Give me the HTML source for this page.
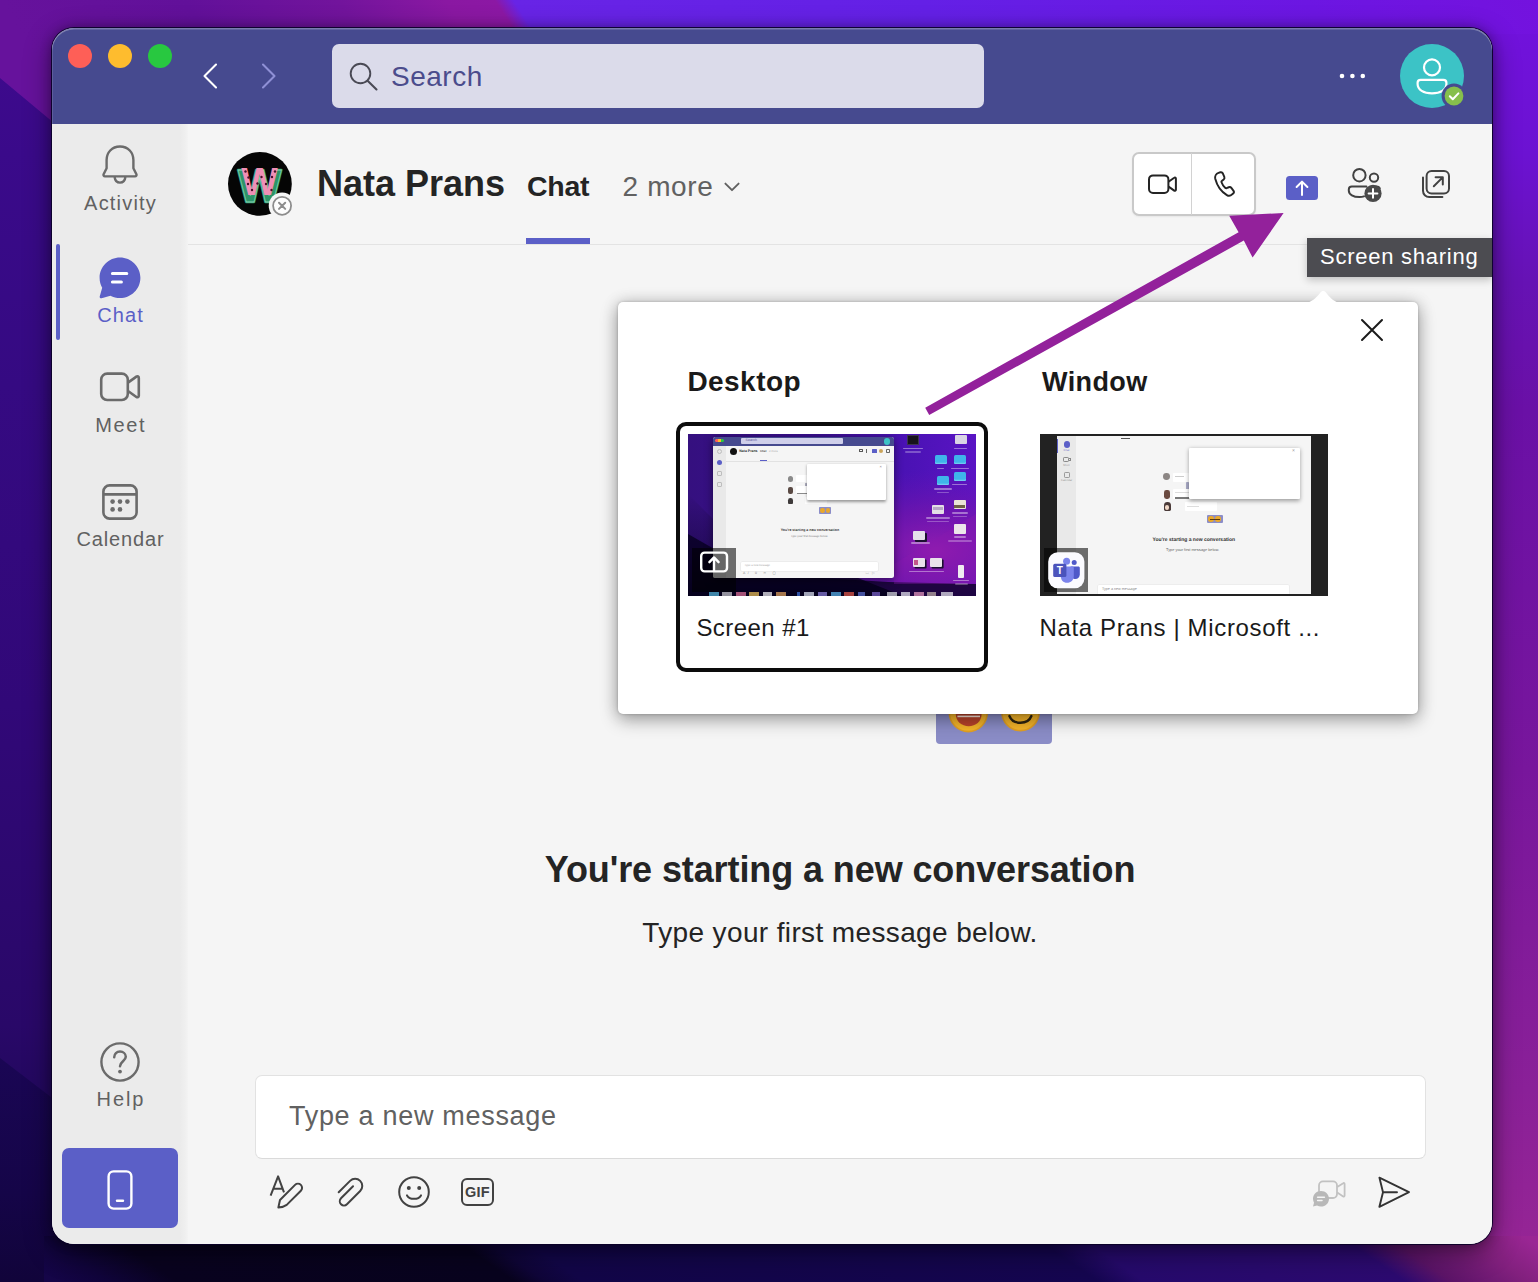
<!DOCTYPE html>
<html lang="en">
<head>
<meta charset="utf-8">
<title>Nata Prans | Microsoft Teams</title>
<style>
*{box-sizing:border-box;margin:0;padding:0}
html,body{width:1538px;height:1282px;overflow:hidden}
body{font-family:"Liberation Sans",sans-serif;position:relative;background:#3a0c8c;color:#242424}
.abs{position:absolute}
#wall{position:absolute;left:0;top:0;width:1538px;height:1282px;overflow:hidden}
#win{position:absolute;left:52px;top:28px;width:1440px;height:1216px;border-radius:22px;overflow:hidden;background:#f5f5f5;box-shadow:0 0 0 1px rgba(10,0,40,.9),0 8px 28px rgba(0,0,0,.45),0 0 12px rgba(0,0,0,.3)}
#titlebar{position:absolute;left:0;top:0;width:1440px;height:96px;background:#464a8f}
#hl{position:absolute;left:0;top:0;width:1440px;height:1216px;border-radius:22px;box-shadow:inset 0 1.5px 0 rgba(255,255,255,.28),inset 1px 0 0 rgba(255,255,255,.12);pointer-events:none}
.tl{position:absolute;top:16px;width:24px;height:24px;border-radius:50%}
#search{position:absolute;left:280px;top:16px;width:652px;height:64px;border-radius:7px;background:#dbdbea}
#search span{position:absolute;left:59px;top:16px;font-size:28px;line-height:34px;color:#4b4c8c;letter-spacing:.5px}
#side{position:absolute;left:0;top:96px;width:136px;height:1120px;background:linear-gradient(90deg,#ebebeb 0,#ebebeb 128px,#efefef 133px,#f3f3f3 136px)}
.nav{position:absolute;left:0;width:136px;text-align:center;font-size:20px;line-height:24px;color:#616161;letter-spacing:.8px}
#main{position:absolute;left:136px;top:96px;width:1304px;height:1120px;background:#f5f5f5}
#hdrline{position:absolute;left:0;top:120px;width:1304px;height:1px;background:#e3e3e3}

.th div,.th span{position:absolute}
.mini{font-family:"Liberation Sans",sans-serif;white-space:nowrap;color:#333;line-height:1;text-rendering:geometricPrecision}
.fold{width:12px;height:9px;border-radius:1.5px;background:#3fb4ea;box-shadow:0 -1.5px 0 -0.2px #6fcaf2 inset}
.dfile{width:12px;height:9px;border-radius:1px;background:#d9d5e4}
.dlab{width:16px;height:1.6px;background:rgba(255,255,255,.4);border-radius:1px}
</style>
</head>
<body>
<div id="wall">
<svg width="1538" height="1282" viewBox="0 0 1538 1282" style="position:absolute;left:0;top:0">
<defs>
<linearGradient id="gL" x1="0" y1="0" x2="0" y2="1"><stop offset="0" stop-color="#400a8e"/><stop offset=".12" stop-color="#3a0a8a"/><stop offset=".3" stop-color="#350a82"/><stop offset=".55" stop-color="#310878"/><stop offset=".8" stop-color="#290868"/><stop offset=".86" stop-color="#22085e"/><stop offset="1" stop-color="#1c0652"/></linearGradient>
<linearGradient id="gT" gradientUnits="userSpaceOnUse" x1="0" y1="0" x2="1087" y2="-699"><stop offset="0" stop-color="#66129c"/><stop offset=".12" stop-color="#62109a"/><stop offset=".22" stop-color="#72149c"/><stop offset=".29" stop-color="#8a18a2"/><stop offset=".322" stop-color="#8c18a4"/><stop offset=".334" stop-color="#6824e6"/><stop offset=".6" stop-color="#6420e6"/><stop offset=".85" stop-color="#6c16e2"/><stop offset="1" stop-color="#7412de"/></linearGradient>
<linearGradient id="gR" x1="0" y1="0" x2="0" y2="1"><stop offset="0" stop-color="#7212de"/><stop offset=".12" stop-color="#6c12d2"/><stop offset=".22" stop-color="#6612b4"/><stop offset=".32" stop-color="#6a10a6"/><stop offset=".6" stop-color="#78169c"/><stop offset=".85" stop-color="#8a2098"/><stop offset="1" stop-color="#982694"/></linearGradient>
<linearGradient id="gB" gradientUnits="userSpaceOnUse" x1="0" y1="1244" x2="496" y2="526"><stop offset="0" stop-color="#150548"/><stop offset=".035" stop-color="#10043a"/><stop offset=".08" stop-color="#09031f"/><stop offset=".3" stop-color="#08031e"/><stop offset=".32" stop-color="#0f0538"/><stop offset=".345" stop-color="#120648"/><stop offset=".68" stop-color="#150650"/><stop offset=".71" stop-color="#260a6c"/><stop offset=".88" stop-color="#2c0a70"/><stop offset=".91" stop-color="#5c1468"/><stop offset=".96" stop-color="#82207e"/><stop offset="1" stop-color="#9a2694"/></linearGradient>
<linearGradient id="gLB" gradientUnits="userSpaceOnUse" x1="0" y1="1060" x2="0" y2="1282"><stop offset="0" stop-color="#1a0654"/><stop offset=".6" stop-color="#150548"/><stop offset="1" stop-color="#11043a"/></linearGradient>
<linearGradient id="gS" x1="0" y1="0" x2="0" y2="1"><stop offset="0" stop-color="#000" stop-opacity=".45"/><stop offset="1" stop-color="#000" stop-opacity="0"/></linearGradient>
</defs>
<rect x="0" y="0" width="800" height="1282" fill="url(#gL)"/>
<rect x="800" y="0" width="738" height="1282" fill="url(#gR)"/>
<path d="M0 0 H1538 V34 H60 V128 L0 78 Z" fill="url(#gT)"/>
<path d="M0 1058 L60 1104 V1282 H0 Z" fill="url(#gLB)"/>
<path d="M44 1236 H1538 V1282 H44 Z" fill="url(#gB)"/>
</svg>
</div>

<div id="win">
  <div id="titlebar">
    <div class="tl" style="left:16px;background:#fe5f57"></div>
    <div class="tl" style="left:56px;background:#febc2e"></div>
    <div class="tl" style="left:96px;background:#28c840"></div>
    <svg class="abs" style="left:146px;top:32px" width="24" height="32" viewBox="0 0 24 32"><path d="M18 4.5 L6.5 16 L18 27.5" fill="none" stroke="#fff" stroke-width="2.1" stroke-linecap="round" stroke-linejoin="round"/></svg>
    <svg class="abs" style="left:205px;top:32px" width="24" height="32" viewBox="0 0 24 32"><path d="M6 4.5 L17.5 16 L6 27.5" fill="none" stroke="#8f90d6" stroke-width="2.1" stroke-linecap="round" stroke-linejoin="round"/></svg>
    <div id="search">
      <svg class="abs" style="left:14px;top:16px" width="34" height="34" viewBox="0 0 34 34"><circle cx="14.5" cy="13.5" r="9.8" fill="none" stroke="#4a4a55" stroke-width="1.9"/><path d="M21.6 20.8 L30.5 29.5" stroke="#4a4a55" stroke-width="2.1" stroke-linecap="round"/></svg>
      <span>Search</span>
    </div>
    <svg class="abs" style="left:1284px;top:40px" width="34" height="16" viewBox="0 0 34 16"><g fill="#fff"><circle cx="6" cy="8" r="2.3"/><circle cx="16.4" cy="8" r="2.3"/><circle cx="26.8" cy="8" r="2.3"/></g></svg>
    <svg class="abs" style="left:1344px;top:12px" width="76" height="76" viewBox="0 0 76 76"><circle cx="36" cy="36" r="32" fill="#3cc3c6"/><circle cx="36" cy="27.4" r="8" fill="none" stroke="#fff" stroke-width="2.2"/><path d="M24.6 39.8 H47.4 C49.2 39.8 50.4 41 50.4 42.8 V44 C50.4 49.8 44.4 53.4 36 53.4 C27.6 53.4 21.6 49.8 21.6 44 V42.8 C21.6 41 22.8 39.8 24.6 39.8 Z" fill="none" stroke="#fff" stroke-width="2.2"/><circle cx="58" cy="56" r="12.4" fill="#464a8f"/><circle cx="58" cy="56" r="9.4" fill="#86bf4c"/><path d="M53.8 56.2 L56.8 59.2 L62.4 53.4" fill="none" stroke="#fff" stroke-width="2" stroke-linecap="round" stroke-linejoin="round"/></svg>
  </div>
  <div id="side">
    <!-- Activity -->
    <svg class="abs" style="left:48px;top:19px" width="40" height="44" viewBox="0 0 40 44"><path d="M20 3.5 C11.8 3.5 6.6 9.6 6.6 17 V25.2 L3.6 31.2 C3.1 32.3 3.8 33.4 5 33.4 H35 C36.2 33.4 36.9 32.3 36.4 31.2 L33.4 25.2 V17 C33.4 9.6 28.2 3.5 20 3.5 Z" fill="none" stroke="#6b6b6b" stroke-width="2.4" stroke-linejoin="round"/><path d="M14.6 34 C15 37.4 17.2 39.6 20 39.6 C22.8 39.6 25 37.4 25.4 34" fill="none" stroke="#6b6b6b" stroke-width="2.4"/></svg>
        <div class="nav" style="top:67px;letter-spacing:1.2px;padding-left:1.2px">Activity</div>
    <!-- Chat active -->
    <div class="abs" style="left:4px;top:120px;width:4px;height:96px;background:#5b5fc7;border-radius:2px"></div>
    <svg class="abs" style="left:46px;top:132px" width="44" height="44" viewBox="0 0 44 44"><path d="M22 1.5 C10.7 1.5 1.6 10.6 1.6 21.8 C1.6 25.4 2.5 28.8 4.2 31.8 L1.7 40.4 C1.4 41.6 2.4 42.6 3.6 42.3 L12.4 39.8 C15.3 41.3 18.6 42.1 22 42.1 C33.3 42.1 42.4 33 42.4 21.8 C42.4 10.6 33.3 1.5 22 1.5 Z" fill="#5b5fc7"/><path d="M14.4 17.4 H28.8 M14.4 26 H23.4" stroke="#fff" stroke-width="3" stroke-linecap="round"/></svg>
    <div class="nav" style="top:179px;color:#5b5fc7;letter-spacing:1.1px;padding-left:1.1px">Chat</div>
    <!-- Meet -->
    <svg class="abs" style="left:46px;top:246px" width="44" height="34" viewBox="0 0 44 34"><rect x="3.2" y="3.6" width="26.6" height="26.4" rx="6" fill="none" stroke="#6b6b6b" stroke-width="2.6"/><path d="M30 12.6 L38.4 6.6 C39.5 5.9 40.8 6.6 40.8 7.9 V25.7 C40.8 27 39.5 27.7 38.4 27 L30 21" fill="none" stroke="#6b6b6b" stroke-width="2.6" stroke-linejoin="round"/></svg>
    <div class="nav" style="top:289px;letter-spacing:1.6px;padding-left:1.6px">Meet</div>
    <!-- Calendar -->
    <svg class="abs" style="left:48px;top:358px" width="40" height="40" viewBox="0 0 40 40"><rect x="3.4" y="3.4" width="33.2" height="33.2" rx="6.2" fill="none" stroke="#6b6b6b" stroke-width="2.6"/><path d="M3.6 12.4 H36.4" stroke="#6b6b6b" stroke-width="2.6"/><g fill="#6b6b6b"><circle cx="12.6" cy="19.6" r="2.3"/><circle cx="20" cy="19.6" r="2.3"/><circle cx="27.4" cy="19.6" r="2.3"/><circle cx="12.6" cy="27.4" r="2.3"/><circle cx="20" cy="27.4" r="2.3"/></g></svg>
    <div class="nav" style="top:403px;letter-spacing:.85px;padding-left:.85px">Calendar</div>
    <!-- Help -->
    <svg class="abs" style="left:46px;top:916px" width="44" height="44" viewBox="0 0 44 44"><circle cx="22" cy="22" r="18.6" fill="none" stroke="#6b6b6b" stroke-width="2.4"/><path d="M16.2 17.2 C16.2 13.8 18.8 11.6 22 11.6 C25.2 11.6 27.8 13.8 27.8 16.8 C27.8 21 22 21.6 22 26.2" fill="none" stroke="#6b6b6b" stroke-width="2.5" stroke-linecap="round"/><circle cx="22" cy="31.6" r="1.9" fill="#6b6b6b"/></svg>
    <div class="nav" style="top:963px;letter-spacing:1.9px;padding-left:1.9px">Help</div>
    <!-- Mobile button -->
    <div class="abs" style="left:10px;top:1024px;width:116px;height:80px;border-radius:7px;background:#5b5fc7"></div>
    <svg class="abs" style="left:54px;top:1045px" width="28" height="42" viewBox="0 0 28 42"><rect x="2.6" y="2.4" width="22.8" height="37.2" rx="5" fill="none" stroke="#fff" stroke-width="2.4"/><path d="M11 31.8 H17" stroke="#fff" stroke-width="2.4" stroke-linecap="round"/></svg>
  </div>
  <div id="main">
    <div id="hdrline"></div>
    <!-- avatar -->
    <svg class="abs" style="left:38px;top:26px" width="76" height="76" viewBox="0 0 76 76">
      <circle cx="33.9" cy="33.9" r="31.9" fill="#050505"/>
      <text x="33.6" y="51.6" text-anchor="middle" font-family="Liberation Sans, sans-serif" font-weight="bold" font-size="46" fill="#2c9468" stroke="#2c9468" stroke-width="2.4" stroke-linejoin="round">W</text>
      <text x="33.6" y="51.6" text-anchor="middle" font-family="Liberation Sans, sans-serif" font-weight="bold" font-size="46" fill="none" stroke="#a6ecd2" stroke-width=".8" opacity=".7">W</text>
      <text x="0" y="0" transform="translate(33.6,45.4) scale(.84,.86)" text-anchor="middle" font-family="Liberation Sans, sans-serif" font-weight="bold" font-size="46" fill="#f08fb6">W</text>
      <g fill="#4a0f2a"><circle cx="19.5" cy="21.5" r="1.2"/><circle cx="22.5" cy="27.5" r="1.2"/><circle cx="22" cy="34" r="1.2"/><circle cx="26" cy="40" r="1.2"/><circle cx="31.5" cy="33.5" r="1.2"/><circle cx="35.5" cy="27" r="1.2"/><circle cx="40" cy="34" r="1.2"/><circle cx="45.5" cy="40" r="1.2"/><circle cx="46" cy="27" r="1.2"/><circle cx="49" cy="21.5" r="1.2"/></g>
      <circle cx="56.1" cy="55.8" r="13.4" fill="#f5f5f5"/>
      <circle cx="56.1" cy="55.8" r="9" fill="#fdfdfd" stroke="#8d8d8d" stroke-width="1.8"/>
      <path d="M53 52.7 L59.2 58.9 M59.2 52.7 L53 58.9" stroke="#8d8d8d" stroke-width="2" stroke-linecap="round"/>
    </svg>
    <div class="abs" style="left:129px;top:38px;font-size:36px;line-height:44px;font-weight:bold;color:#242424;white-space:nowrap">Nata Prans</div>
    <div class="abs" style="left:339px;top:45px;font-size:28.5px;line-height:34px;font-weight:bold;color:#242424;white-space:nowrap;letter-spacing:-.3px">Chat</div>
    <div class="abs" style="left:338px;top:114px;width:64px;height:6px;background:#5b5fc7"></div>
    <div class="abs" style="left:434.6px;top:46px;font-size:28px;line-height:34px;color:#616161;white-space:nowrap;letter-spacing:.6px">2 more</div>
    <svg class="abs" style="left:534px;top:55.6px" width="20" height="14" viewBox="0 0 20 14"><path d="M3.4 3.6 L10 10.2 L16.6 3.6" fill="none" stroke="#616161" stroke-width="1.9" stroke-linecap="round" stroke-linejoin="round"/></svg>
    <!-- call buttons -->
    <div class="abs" style="left:944px;top:28px;width:123.5px;height:63.5px;border:2px solid #c9c9c9;border-radius:7px;background:#fff;box-shadow:0 1px 2px rgba(0,0,0,.06)"></div>
    <div class="abs" style="left:1002.6px;top:29px;width:1.5px;height:62px;background:#d2d2d2"></div>
    <svg class="abs" style="left:958px;top:47px" width="34" height="26" viewBox="0 0 34 26"><rect x="3" y="4.4" width="19.4" height="17.6" rx="4" fill="none" stroke="#242424" stroke-width="2"/><path d="M22.6 10.8 L28.2 6.8 C29 6.2 29.9 6.8 29.9 7.7 V18.7 C29.9 19.6 29 20.2 28.2 19.6 L22.6 15.6" fill="none" stroke="#242424" stroke-width="2" stroke-linejoin="round"/></svg>
    <svg class="abs" style="left:1021px;top:45px" width="30" height="30" viewBox="0 0 30 30"><path d="M8.3 4.1 L10.4 3.5 C11.6 3.2 12.8 3.8 13.3 4.9 L14.9 8.7 C15.3 9.7 15 10.9 14.2 11.6 L12 13.4 C11.6 13.7 11.5 14.3 11.7 14.8 C12.5 17.1 14 19.4 16.1 21.3 C16.5 21.6 17 21.7 17.5 21.5 L20 20.5 C21 20.1 22.2 20.4 22.9 21.3 L25.2 24.3 C26 25.3 25.9 26.7 25 27.6 L23.8 28.6 C22.2 30.2 19.8 30.6 17.8 29.4 C11.2 25.5 6.6 18.6 4.6 10.9 C4 8.1 5.5 5 8.3 4.1 Z" transform="translate(2.2,0.2) scale(.88)" fill="none" stroke="#242424" stroke-width="2.2" stroke-linejoin="round"/></svg>
    <!-- share screen -->
    <div class="abs" style="left:1098px;top:52px;width:32px;height:24px;border-radius:3.5px;background:#5b5fc7"></div>
    <svg class="abs" style="left:1098px;top:52px" width="32" height="24" viewBox="0 0 32 24"><path d="M16 19 V6 M10.6 11 L16 5.6 L21.4 11" fill="none" stroke="#fff" stroke-width="2" stroke-linecap="round" stroke-linejoin="round"/></svg>
    <!-- add people -->
    <svg class="abs" style="left:1157px;top:42px" width="40" height="38" viewBox="0 0 40 38"><circle cx="14.4" cy="9.2" r="6.2" fill="none" stroke="#424242" stroke-width="2"/><circle cx="29" cy="11.6" r="4.2" fill="none" stroke="#424242" stroke-width="2"/><path d="M19 30.4 C17.6 30.9 16 31.1 14.4 31.1 C8.4 31.1 3.8 28.6 3.8 24.4 V23.4 C3.8 21.7 5.2 20.4 6.8 20.4 H21.4" fill="none" stroke="#424242" stroke-width="2" stroke-linecap="round"/><path d="M26.4 20.4 H31.6 C33.2 20.4 34.4 21.4 34.8 22.6" fill="none" stroke="#424242" stroke-width="2" stroke-linecap="round"/><circle cx="28" cy="27.4" r="8.6" fill="#4a4a4a"/><path d="M28 23 V31.8 M23.6 27.4 H32.4" stroke="#fff" stroke-width="2" stroke-linecap="round"/></svg>
    <!-- pop out -->
    <svg class="abs" style="left:1232px;top:44px" width="32" height="32" viewBox="0 0 32 32"><rect x="6.6" y="3" width="22.4" height="22.4" rx="5" fill="none" stroke="#424242" stroke-width="2"/><path d="M3 9.6 V22.8 C3 26.2 5.8 29 9.2 29 H22.4" fill="none" stroke="#424242" stroke-width="2" stroke-linecap="round"/><path d="M13.8 18.2 L22.4 9.6 M15.6 9.2 H22.8 V16.4" fill="none" stroke="#424242" stroke-width="2" stroke-linecap="round" stroke-linejoin="round"/></svg>
    <!-- emoji sticker (partially hidden by popup) -->
    <div class="abs" style="left:748px;top:540px;width:116px;height:80px;border-radius:4px;background:#8a8cc6"></div>
    <svg class="abs" style="left:748px;top:560px" width="116" height="60" viewBox="0 0 116 60">
      <circle cx="32.3" cy="28.6" r="19" fill="#f5b52a" stroke="#e2a024" stroke-width="1.6"/>
      <path d="M19.8 30 H45.6 C45.6 37.6 39.6 42.2 32.7 42.2 C25.8 42.2 19.8 37.6 19.8 30 Z" fill="#b9432b"/>
      <path d="M21.4 32.4 H44" stroke="#fbe9dc" stroke-width="1.6"/>
      <circle cx="84.5" cy="28" r="18.6" fill="#f5b52a" stroke="#e2a024" stroke-width="1.6"/>
      <path d="M73.4 32 C77 41 92 41 95.4 32" fill="none" stroke="#2e2410" stroke-width="2.4" stroke-linecap="round"/>
    </svg>
    <div id="t1" class="abs" style="left:0;top:724px;width:1304px;text-align:center;font-size:36px;line-height:44px;font-weight:bold;color:#242424;white-space:nowrap;letter-spacing:-.1px"><span>You're starting a new conversation</span></div>
    <div id="t2" class="abs" style="left:0;top:791px;width:1304px;text-align:center;font-size:28px;line-height:36px;color:#242424;white-space:nowrap;letter-spacing:.37px"><span>Type your first message below.</span></div>
    <!-- share popup -->
    <div id="pop" class="abs" style="left:430px;top:178px;width:800px;height:412px;border-radius:5px;background:#fff;box-shadow:0 6px 18px rgba(0,0,0,.32),0 0 16px rgba(0,0,0,.15),0 0 3px rgba(0,0,0,.2)">
      <svg class="abs" style="left:686px;top:-13px" width="38" height="14" viewBox="0 0 38 14"><path d="M0 14 C8 13.6 12.6 8.4 16.6 3.2 C18.2 1.2 20.2 1.2 21.8 3.2 C25.8 8.4 30 13.6 38 14 Z" fill="#fff"/></svg>
      <svg class="abs" style="left:740px;top:14px" width="28" height="28" viewBox="0 0 28 28"><path d="M4 4 L24 24 M24 4 L4 24" stroke="#1b1b1b" stroke-width="2" stroke-linecap="round"/></svg>
      <div class="abs" style="left:69.4px;top:63px;font-size:28px;line-height:34px;font-weight:bold;color:#1a1a1a;white-space:nowrap;letter-spacing:.45px" id="p1"><span>Desktop</span></div>
      <div class="abs" style="left:424px;top:63px;font-size:27px;line-height:34px;font-weight:bold;color:#1a1a1a;white-space:nowrap;letter-spacing:.4px" id="p2"><span>Window</span></div>
      <!-- selected card -->
      <div class="abs" style="left:58px;top:120px;width:312px;height:250px;border:4px solid #0c0c0c;border-radius:10px"></div>
      <div id="th1" class="abs th" style="left:70px;top:132px;width:288px;height:162px;overflow:hidden;background:#2a0a6a">
        <svg style="position:absolute;left:0;top:0" width="288" height="162" viewBox="0 0 288 162">
          <defs>
            <linearGradient id="w1" x1="0" y1="0" x2="1" y2="0"><stop offset="0" stop-color="#35107f"/><stop offset=".45" stop-color="#3a0f90"/><stop offset=".75" stop-color="#4a12b4"/><stop offset="1" stop-color="#5a14c4"/></linearGradient>
            <linearGradient id="w2" x1="0" y1="0" x2="0" y2="1"><stop offset="0" stop-color="#000" stop-opacity="0"/><stop offset=".55" stop-color="#05001c" stop-opacity=".35"/><stop offset="1" stop-color="#04001a" stop-opacity=".95"/></linearGradient>
            <radialGradient id="w3" cx=".86" cy=".72" r=".5"><stop offset="0" stop-color="#9a1eae" stop-opacity=".9"/><stop offset=".5" stop-color="#7c16aa" stop-opacity=".6"/><stop offset="1" stop-color="#6a14b0" stop-opacity="0"/></radialGradient>
          </defs>
          <rect width="288" height="162" fill="url(#w1)"/>
          <rect width="288" height="162" fill="url(#w3)"/>
          <path d="M0 60 L0 162 L215 162 L160 140 L60 120 Z" fill="url(#w2)"/>
          <path d="M0 100 L0 162 L288 162 L288 150 L200 148 L70 140 Z" fill="#05001c" opacity=".75"/>
          <path d="M206 130 L288 80 L288 150 L206 150 Z" fill="#8a1ab0" opacity=".35"/>
        </svg>
        <!-- mini teams window -->
        <div style="left:24.6px;top:2.9px;width:181.2px;height:141px;background:#f5f5f5;border-radius:2.5px;overflow:hidden;box-shadow:0 2px 8px rgba(0,0,0,.5)">
          <div style="left:0;top:0;width:181.2px;height:9px;background:#464a8f"></div>
          <div style="left:2px;top:2px;width:9px;height:3px;border-radius:1.5px;background:linear-gradient(90deg,#fe5f57 0 30%,#febc2e 36% 64%,#28c840 70%)"></div>
          <div style="left:28.3px;top:1.4px;width:102.5px;height:6.2px;border-radius:1px;background:#cfcfea"></div>
          <span class="mini" style="left:33px;top:2.4px;font-size:3.6px;color:#5a5b98">Search</span>
          <div style="left:171px;top:1.4px;width:6.4px;height:6.4px;border-radius:50%;background:#3cc3c6"></div>
          <div style="left:0;top:9px;width:13.8px;height:132px;background:#e9e9e9"></div>
          <div style="left:4.4px;top:12.4px;width:5px;height:5px;border-radius:50%;border:.8px solid #bdbdbd"></div>
          <div style="left:4.2px;top:23px;width:5.4px;height:5.4px;border-radius:50%;background:#5b5fc7"></div>
          <div style="left:4.2px;top:34.4px;width:5.6px;height:4.4px;border-radius:1px;border:.8px solid #bdbdbd"></div>
          <div style="left:4.2px;top:45.4px;width:5.4px;height:5.2px;border-radius:1px;border:.8px solid #bdbdbd"></div>
          <div style="left:13.8px;top:24.2px;width:168px;height:.6px;background:#e2e2e2"></div>
          <div style="left:17.4px;top:11.4px;width:7px;height:7px;border-radius:50%;background:#111"></div>
          <span class="mini" style="left:26.7px;top:13px;font-size:3.5px;font-weight:bold;color:#333">Nata Prans</span>
          <span class="mini" style="left:47.4px;top:13.4px;font-size:2.9px;font-weight:bold;color:#555">Chat</span>
          <span class="mini" style="left:56.3px;top:13.4px;font-size:2.9px;color:#aaa">2 more</span>
          <div style="left:47px;top:23.4px;width:7.4px;height:.9px;background:#5b5fc7"></div>
          <div style="left:146px;top:12.6px;width:4px;height:3px;border-radius:.6px;border:.6px solid #555"></div>
          <div style="left:153px;top:12.4px;width:1.2px;height:3.6px;background:#666"></div>
          <div style="left:159.6px;top:12.6px;width:4.4px;height:3.2px;border-radius:.6px;background:#5b5fc7"></div>
          <div style="left:166.4px;top:12.2px;width:4px;height:4px;border-radius:50%;background:#caa45a"></div>
          <div style="left:173.4px;top:12.4px;width:3.6px;height:3.6px;border-radius:.8px;border:.6px solid #666"></div>
          <!-- bubbles -->
          <div style="left:75px;top:39.6px;width:5.4px;height:5.4px;border-radius:50%;background:#8a8a8a"></div>
          <div style="left:75.4px;top:50.6px;width:4.6px;height:6.4px;border-radius:2px;background:#5a4a44"></div>
          <div style="left:75.2px;top:60.8px;width:5px;height:6.2px;border-radius:2.4px 2.4px 1px 1px;background:#3e3a3a"></div>
          <div style="left:83px;top:38.4px;width:12px;height:7px;border-radius:1px;background:#fff"></div>
          <div style="left:92px;top:46px;width:2.6px;height:6.4px;border-radius:.6px;background:#aab"></div>
          <div style="left:83px;top:49.4px;width:28px;height:6.8px;border-radius:1px;background:#fff"></div>
          <div style="left:84px;top:56.4px;width:26px;height:1.1px;background:#8a8a8a"></div>
          <div style="left:92px;top:60.4px;width:22px;height:6.4px;border-radius:1px;background:#fff"></div>
          <div style="left:106.6px;top:70.6px;width:11.8px;height:6.8px;border-radius:.8px;background:#8b8dc8"></div>
          <div style="left:107.8px;top:71.6px;width:4.4px;height:4.4px;border-radius:50%;background:#e9a82c"></div>
          <div style="left:113px;top:71.6px;width:4.4px;height:4.4px;border-radius:50%;background:#e9a82c"></div>
          <!-- mini popup -->
          <div style="left:94.9px;top:27px;width:78.6px;height:36.2px;background:#fff;border-radius:1px;box-shadow:0 1.2px 3px rgba(0,0,0,.38)"></div>
          <span class="mini" style="left:167px;top:28px;font-size:4px;color:#777">×</span>
          <span class="mini" style="left:68.2px;top:92px;font-size:3.54px;font-weight:bold;color:#3a3a3a">You're starting a new conversation</span>
          <span class="mini" style="left:78.1px;top:99.2px;font-size:2.73px;color:#777">Type your first message below.</span>
          <div style="left:28.4px;top:125.2px;width:137px;height:8.6px;border-radius:1px;background:#fff;box-shadow:0 0 0 .5px #e4e4e4"></div>
          <span class="mini" style="left:32px;top:128.2px;font-size:2.7px;color:#9a9a9a">Type a new message</span>
          <span class="mini" style="left:30.4px;top:135.4px;font-size:3.4px;color:#777;letter-spacing:2.6px">A/ 0 ☺ ▢</span>
          <span class="mini" style="left:153px;top:135.2px;font-size:3.6px;color:#999;letter-spacing:3px">▭▷</span>
        </div>
        <!-- desktop icons -->
        <div style="left:219.4px;top:1.4px;width:12px;height:10px;background:#17131c;border:.7px solid #3c3350"></div>
        <div class="dlab" style="left:215px;top:13.6px;width:20px"></div><div class="dlab" style="left:217px;top:17px;width:16px;opacity:.7"></div>
        <div class="dfile" style="left:266.6px;top:1.4px"></div><div class="dlab" style="left:266px;top:13.6px;width:13px"></div>
        <div class="fold" style="left:246.5px;top:21.4px"></div><div class="dlab" style="left:249px;top:33.6px;width:7px"></div>
        <div class="fold" style="left:265.6px;top:21.4px"></div><div class="dlab" style="left:262.6px;top:33.6px;width:18px"></div>
        <div class="fold" style="left:248.8px;top:42px"></div><div class="dlab" style="left:246px;top:54px;width:18px"></div><div class="dlab" style="left:249px;top:57.6px;width:12px;opacity:.7"></div>
        <div class="fold" style="left:265.6px;top:37.6px"></div><div class="dlab" style="left:264px;top:49.6px;width:15px"></div>
        <div class="dfile" style="left:243.8px;top:71px;background:#e4dfe6"></div><div style="left:245px;top:73.4px;width:9.6px;height:3px;background:#b8a6c8"></div><div class="dlab" style="left:238px;top:83px;width:24px"></div><div class="dlab" style="left:238.6px;top:86.6px;width:22px;opacity:.7"></div>
        <div class="dfile" style="left:265.6px;top:66.4px;background:#e9e4d6"></div><div style="left:266.4px;top:70.6px;width:10.4px;height:3.6px;background:#6d6046"></div><div class="dlab" style="left:264px;top:78px;width:16px"></div><div class="dlab" style="left:265px;top:81.6px;width:14px;opacity:.7"></div>
        <div class="dfile" style="left:266px;top:90px;height:10px;background:#ece6ea"></div><div class="dlab" style="left:266px;top:102.4px;width:12px"></div><div class="dlab" style="left:260px;top:106px;width:24px;opacity:.7"></div>
        <div class="dfile" style="left:225px;top:96.6px;background:#e6e0ea;box-shadow:2px 2px 0 #1b1030"></div><div class="dlab" style="left:222.6px;top:108.4px;width:19px"></div>
        <div class="dfile" style="left:224.6px;top:124.4px;background:#e9e2ea;box-shadow:1.6px 1.6px 0 #1b1030"></div><div style="left:226px;top:126px;width:4px;height:5px;background:#c25a8a"></div>
        <div class="dfile" style="left:242.4px;top:124.4px;background:#e9e2ea;box-shadow:1.6px 1.6px 0 #1b1030"></div>
        <div class="dlab" style="left:221px;top:136.6px;width:35px"></div>
        <div class="dfile" style="left:270px;top:131px;width:6.4px;height:12.6px;background:#efeaf0"></div><div class="dlab" style="left:265px;top:145.6px;width:16px"></div><div class="dlab" style="left:266.6px;top:149.2px;width:13px;opacity:.7"></div>
        <!-- dock -->
        <div style="left:21px;top:158.4px;width:244px;height:3.6px;background:linear-gradient(90deg,#53b8de 0 4%,transparent 4% 5.5%,#c9c9cf 5.5% 9.5%,transparent 9.5% 11%,#e0719a 11% 15%,transparent 15% 16.5%,#eec25a 16.5% 20.5%,transparent 20.5% 22%,#f1f1f4 22% 26%,transparent 26% 27.5%,#e2a35e 27.5% 31.5%,transparent 31.5% 36%,#3d6fd8 36% 37.4%,transparent 37.4% 39%,#dde3f2 39% 43%,transparent 43% 44.5%,#8a7dd8 44.5% 48.5%,transparent 48.5% 50%,#58b4ec 50% 54%,transparent 54% 55.5%,#e45a4a 55.5% 59.5%,transparent 59.5% 61%,#5b6fd0 61% 64%,transparent 64% 67%,#7a62c8 67% 70%,transparent 70% 73%,#d8d8e2 73% 77%,transparent 77% 78.5%,#e8e8f0 78.5% 82.5%,transparent 82.5% 84%,#e79ac0 84% 88%,transparent 88% 89.5%,#c0b0a8 89.5% 93%,transparent 93% 95%,#e8e8ee 95% 100%);opacity:.72"></div>
        <!-- overlay -->
        <div style="left:4px;top:114px;width:44px;height:44px;background:rgba(0,0,0,.56)"></div>
        <svg style="position:absolute;left:8px;top:113px" width="36" height="30" viewBox="0 0 36 30"><rect x="5.2" y="5.6" width="25.8" height="18.8" rx="3.4" fill="none" stroke="#fff" stroke-width="2.4"/><path d="M18 23.4 V11 M13.4 15.2 L18 10.4 L22.6 15.2" fill="none" stroke="#fff" stroke-width="2.4" stroke-linecap="round" stroke-linejoin="round"/></svg>
      </div>
      <div class="abs" style="left:78.4px;top:311px;font-size:24px;line-height:30px;color:#1a1a1a;white-space:nowrap;letter-spacing:.45px" id="p3"><span>Screen #1</span></div>
      <div id="th2" class="abs th" style="left:422px;top:132px;width:288px;height:162px;overflow:hidden;background:#222">
        <div style="left:17.3px;top:1.9px;width:253.4px;height:158.5px;background:#f5f5f5;overflow:hidden">
          <div style="left:0;top:0;width:19.2px;height:158.5px;background:#e9e9e9"></div>
          <div style="left:0;top:3px;width:.9px;height:14px;background:#5b5fc7"></div>
          <div style="left:6.4px;top:5.2px;width:6.8px;height:6.8px;border-radius:50%;background:#5b5fc7"></div>
          <span class="mini" style="left:6.2px;top:12.8px;font-size:2.8px;color:#7a7ccc">Chat</span>
          <div style="left:6.2px;top:21.2px;width:5.4px;height:5px;border-radius:1.2px;border:.8px solid #8a8a8a"></div><div style="left:11.6px;top:22.2px;width:2px;height:3px;border:.8px solid #8a8a8a;border-left:0"></div>
          <span class="mini" style="left:6px;top:28.4px;font-size:2.8px;color:#999">Meet</span>
          <div style="left:6.4px;top:35.8px;width:6.6px;height:6.2px;border-radius:1.2px;border:.8px solid #9a9a9a"></div>
          <span class="mini" style="left:3.6px;top:43.6px;font-size:2.8px;color:#999">Calendar</span>
          <div style="left:64px;top:2.4px;width:9px;height:1px;background:#555"></div>
          <!-- bubbles -->
          <div style="left:106.2px;top:37.4px;width:6.8px;height:6.8px;border-radius:50%;background:#8c8684"></div>
          <div style="left:107.2px;top:54.6px;width:5.4px;height:8.4px;border-radius:2.4px;background:#6a4a40"></div>
          <div style="left:106.6px;top:66.6px;width:6.8px;height:8.6px;border-radius:3.4px 3.4px 1.4px 1.4px;background:#4a3a38"></div>
          <div style="left:108px;top:69.6px;width:4px;height:4.6px;border-radius:2px;background:#f0d8c8"></div>
          <div style="left:116px;top:37px;width:26px;height:9px;border-radius:1px;background:#fff"></div>
          <div style="left:118px;top:40.6px;width:9px;height:.9px;background:#ccc"></div>
          <div style="left:128.6px;top:46.4px;width:3.6px;height:8.6px;border-radius:.8px;background:#a9aac6"></div>
          <div style="left:116px;top:53.6px;width:40px;height:9.6px;border-radius:1px;background:#fff"></div>
          <div style="left:118px;top:55.8px;width:22px;height:.9px;background:#ddd"></div>
          <div style="left:118px;top:61.6px;width:35px;height:1.3px;background:#7a7a7a"></div>
          <div style="left:128px;top:66.4px;width:32px;height:9px;border-radius:1px;background:#fff"></div>
          <div style="left:130px;top:70.4px;width:12px;height:.9px;background:#ddd"></div>
          <div style="left:149.6px;top:79px;width:15.8px;height:8.6px;border-radius:1px;background:#8b8dc8"></div>
          <div style="left:151.2px;top:80.2px;width:5.6px;height:5.6px;border-radius:50%;background:#eaa92c"></div>
          <div style="left:158.2px;top:80.2px;width:5.6px;height:5.6px;border-radius:50%;background:#eaa92c"></div>
          <div style="left:152.4px;top:82.8px;width:10px;height:1px;background:#5a3a10"></div>
          <!-- mini popup -->
          <div style="left:132.2px;top:12.2px;width:110.7px;height:50.6px;background:#fff;border-radius:1px;box-shadow:0 1.6px 4px rgba(0,0,0,.36)"></div>
          <span class="mini" style="left:234.6px;top:13.6px;font-size:5px;color:#8a8a8a">×</span>
          <span class="mini" style="left:95.3px;top:102.2px;font-size:5px;font-weight:bold;color:#2e2e2e">You're starting a new conversation</span>
          <span class="mini" style="left:108.7px;top:112.2px;font-size:3.88px;color:#666">Type your first message below.</span>
          <div style="left:40.9px;top:149.2px;width:190.7px;height:12px;border-radius:1px;background:#fff;box-shadow:0 0 0 .5px #e6e6e6"></div>
          <span class="mini" style="left:44.6px;top:152.2px;font-size:3.7px;color:#8a8a8a">Type a new message</span>
        </div>
        <!-- overlay -->
        <div style="left:4.3px;top:114.1px;width:43.6px;height:43.9px;background:rgba(0,0,0,.56)"></div>
        <svg style="position:absolute;left:7.8px;top:118.3px" width="37" height="37" viewBox="0 0 37 37">
          <rect x="0.2" y="0.2" width="36.2" height="36" rx="9.6" fill="#fbfbff"/>
          <circle cx="26.2" cy="10.6" r="2.5" fill="#5059c9"/>
          <path d="M22.6 14.6 H30.4 C31.2 14.6 31.8 15.2 31.8 16 V22.2 C31.8 25 29.8 27 27.4 27 C25 27 22.6 25 22.6 22.2 Z" fill="#5059c9"/>
          <circle cx="18.6" cy="9.2" r="3.5" fill="#7b83eb"/>
          <path d="M12.8 14.4 H24.4 C25.2 14.4 25.8 15 25.8 15.8 V24 C25.8 28 22.8 30.8 19 30.8 C15.2 30.8 12.8 28 12.8 24 Z" fill="#7b83eb"/>
          <rect x="5.2" y="11.8" width="13.2" height="13.2" rx="1.6" fill="#4b53bc"/>
          <text x="11.8" y="22.2" text-anchor="middle" font-family="Liberation Sans, sans-serif" font-weight="bold" font-size="10" fill="#fff">T</text>
        </svg>
      </div>
      <div class="abs" style="left:421.4px;top:311px;font-size:24px;line-height:30px;color:#1a1a1a;white-space:nowrap;letter-spacing:.66px" id="p4"><span>Nata Prans | Microsoft ...</span></div>
    </div>
    <!-- tooltip -->
    <div class="abs" style="left:1119px;top:114px;width:185px;height:39px;background:#4c4c51;box-shadow:0 3px 8px rgba(0,0,0,.22)"></div>
    <div class="abs" style="left:1132px;top:119px;font-size:22px;line-height:28px;color:#fff;white-space:nowrap;letter-spacing:.75px" id="p5"><span>Screen sharing</span></div>
    <!-- annotation arrow -->
    <svg class="abs" style="left:700px;top:70px" width="420" height="240" viewBox="888 194 420 240"><path d="M925.2 407.8 L929.2 415 L1243.8 240.6 L1252.6 257.6 L1283.6 213 L1229.2 215.8 L1238.6 232.2 Z" fill="#93219b"/></svg>
    <!-- compose -->
    <div class="abs" style="left:67px;top:951px;width:1171px;height:84px;border:1.5px solid #e2e2e2;border-bottom-color:#dadada;border-radius:7px;background:#fff"></div>
    <div id="t3" class="abs" style="left:101px;top:975px;font-size:27px;line-height:34px;color:#616161;white-space:nowrap;letter-spacing:.7px"><span>Type a new message</span></div>
    <!-- toolbar icons -->
    <svg class="abs" style="left:80px;top:1050px" width="38" height="38" viewBox="0 0 38 38"><path d="M2.6 21.6 L10.1 2.4 L16 18.3 M5.5 14.7 H14.3" fill="none" stroke="#424242" stroke-width="2" stroke-linecap="butt" stroke-linejoin="round"/><g transform="translate(22,20) rotate(45)"><path d="M-2.85 11.3 V-10 A4.1 4.1 0 0 1 5.35 -10 V10 Q4.6 14.4 1.25 17.7 Z" fill="none" stroke="#424242" stroke-width="2" stroke-linejoin="round"/></g></svg>
    <svg class="abs" style="left:146px;top:1050px" width="36" height="38" viewBox="0 0 36 38"><g transform="translate(16,18) rotate(45)"><path d="M-7.8 8.2 V-7.9 A7.15 7.15 0 0 1 6.5 -7.9 V10.8 A4.2 4.2 0 0 1 -1.9 10.8 V-6.2" fill="none" stroke="#424242" stroke-width="2" stroke-linecap="round"/></g></svg>
    <svg class="abs" style="left:208px;top:1050px" width="36" height="36" viewBox="0 0 36 36"><circle cx="18" cy="18" r="14.8" fill="none" stroke="#424242" stroke-width="2"/><circle cx="12.8" cy="14" r="2" fill="#424242"/><circle cx="23.2" cy="14" r="2" fill="#424242"/><path d="M11 21.4 C13.6 26 22.4 26 25 21.4" fill="none" stroke="#424242" stroke-width="2" stroke-linecap="round"/></svg>
    <div class="abs" style="left:273px;top:1054px;width:33px;height:28px;border:2px solid #424242;border-radius:6px;font-size:14.5px;line-height:24px;font-weight:bold;color:#424242;text-align:center;letter-spacing:.3px">GIF</div>
    <!-- right icons -->
    <svg class="abs" style="left:1123px;top:1053.5px" width="38" height="34" viewBox="0 0 38 34"><rect x="8" y="3.4" width="18" height="16.6" rx="4" fill="none" stroke="#c2c2c2" stroke-width="1.8"/><path d="M26.2 9 L32.2 5.2 C32.8 4.8 33.6 5.2 33.6 6 V17.6 C33.6 18.4 32.8 18.8 32.2 18.4 L26.2 14.6" fill="none" stroke="#c2c2c2" stroke-width="1.8" stroke-linejoin="round"/><path d="M10 13 C5.4 13 2 16.4 2 20.8 C2 22.2 2.4 23.6 3 24.8 L2 28.6 L6 27.6 C7.2 28.2 8.6 28.6 10 28.6 C14.6 28.6 18 25.2 18 20.8 C18 16.4 14.6 13 10 13 Z" fill="#b8b8b8"/><path d="M6.6 19.2 H13.4 M6.6 22.6 H11" stroke="#f5f5f5" stroke-width="1.5" stroke-linecap="round"/></svg>
    <svg class="abs" style="left:1186px;top:1050px" width="40" height="38" viewBox="0 0 40 38"><path d="M5.4 3.6 L35 18.2 L5.4 32.8 L9 18.2 Z M9 18.2 H23" fill="none" stroke="#333" stroke-width="1.9" stroke-linejoin="round" stroke-linecap="round"/></svg>
  </div>
  <div id="hl"></div>
</div>
</body>
</html>
